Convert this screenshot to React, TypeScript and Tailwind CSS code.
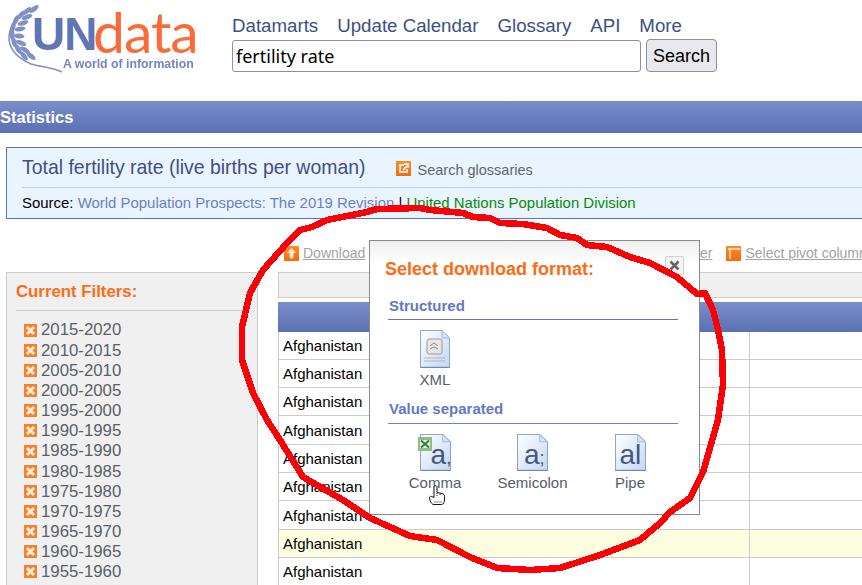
const navItems = ['Datamarts', 'Update Calendar', 'Glossary', 'API', 'More'];
const periods = ['2015-2020', '2010-2015', '2005-2010', '2000-2005', '1995-2000', '1990-1995', '1985-1990', '1980-1985', '1975-1980', '1970-1975', '1965-1970', '1960-1965', '1955-1960'];
const rowHeights = ['h-[28px]', 'h-[28px]', 'h-[28px]', 'h-[29px]', 'h-[28px]', 'h-[28px]', 'h-[29px]', 'h-[28px]', 'h-[28px]'];

const leaves = [
	[34, 9, -38], [27, 11, -40], [21, 15, -48], [27, 17, -20], [16, 20, -62], [23, 23, -18], [13, 27, -75], [20, 29, -10],
	[12, 34, -88], [19, 36, 5], [14, 42, 75], [21, 43, 20], [18, 49, 60], [25, 50, 30], [24, 56, 50], [31, 56, 38],
];

const Logo = () => (
	<div className="relative w-[232px] h-[76px] shrink-0 blur-[0.4px]">
		<svg width="70" height="76" viewBox="0 0 70 76" className="absolute left-0 top-0">
			<path d="M36 8C20 14 10 24 9 36c-1 12 8 22 22 28 10 3 20 3 31 8" fill="none" stroke="#7f90c6" strokeWidth="1.5" />
			{leaves.map(([x, y, r]) => (
				<ellipse key={`${x}-${y}`} cx={x} cy={y} rx="5.5" ry="2.4" fill="#8191c6" transform={`rotate(${r} ${x} ${y})`} />
			))}
		</svg>
		<div className="absolute left-[32px] top-[10px] font-['Liberation_Sans',sans-serif] font-bold text-[46px] leading-[48px] tracking-[-1px] text-[#5f75b6]">UN</div>
		<div className="absolute left-[93px] top-[4px] font-['Lato',sans-serif] font-normal text-[57px] leading-[54px] tracking-[-1px] text-[#fb6b38]">data</div>
		<div className="absolute left-[63px] top-[58px] font-['Liberation_Sans',sans-serif] text-[12.300px] leading-[13px] font-bold text-[#7385bf] whitespace-nowrap">A world of information</div>
	</div>
);

const OrangeBox = ({ children, size = 15 }: { children: React.ReactNode; size?: number }) => (
	<svg width={size} height={size} viewBox="0 0 15 15" className="shrink-0 block">
		<defs>
			<linearGradient id="orangeFill" x1="0" y1="0" x2="0" y2="1">
				<stop offset="0" stopColor="#ff8a2a" />
				<stop offset="1" stopColor="#f76a0c" />
			</linearGradient>
		</defs>
		<rect width="15" height="15" fill="url(#orangeFill)" />
		{children}
	</svg>
);

const FilterX = () => (
	<svg width="13" height="13" viewBox="0 0 13 13" className="shrink-0">
		<rect width="13" height="13" fill="#fb7f26" />
		<path d="M3 3l7 7M10 3l-7 7" stroke="#ffeedd" strokeWidth="3" />
	</svg>
);

const DocIcon = ({ width, height, children }: { width: number; height: number; children?: React.ReactNode }) => (
	<svg width={width} height={height} viewBox="0 0 30 38" preserveAspectRatio="none" className="block">
		<defs>
			<linearGradient id="docFill" x1="0" y1="0" x2="1" y2="1">
				<stop offset="0" stopColor="#ffffff" />
				<stop offset="1" stopColor="#c4d7f2" />
			</linearGradient>
		</defs>
		<path d="M.5.5H22L29.5 8V37.5H.5Z" fill="url(#docFill)" stroke="#8ea6cf" />
		<path d="M22 .5V8h7.5Z" fill="#d6e3f5" stroke="#a9bcdc" />
		<path d="M.5 37.5H29.5" stroke="#6d88b8" strokeWidth="1.4" />
		{children}
	</svg>
);

const LetterDoc = ({ mark, offset, markClass }: { mark: string; offset: string; markClass: string }) => (
	<div className="relative w-[31px] h-[37px]">
		<DocIcon width={31} height={37} />
		<div className={`absolute top-[5px] font-['Liberation_Sans',sans-serif] text-[28px] leading-[32px] text-[#46587f] whitespace-nowrap ${offset}`}>
			a<span className={markClass}>{mark}</span>
		</div>
	</div>
);

const ExcelBadge = () => (
	<svg width="14" height="14" viewBox="0 0 14 14" className="absolute -left-[2px] top-[3px]">
		<rect width="14" height="14" fill="#8fbf84" />
		<rect x="2" y="3" width="10" height="8" fill="#e5f1e0" />
		<path d="M3 3.5l8 7M11 3.5l-8 7" stroke="#2f7d3a" strokeWidth="2" />
	</svg>
);

const FormatOption = ({ label, width, children }: { label: string; width: string; children: React.ReactNode }) => (
	<div className={`flex flex-col items-center shrink-0 ${width}`}>
		{children}
		<div className="mt-[3px] text-[15px] leading-[18px] text-[#555c6c] whitespace-nowrap">{label}</div>
	</div>
);

const DownloadModal = () => (
	<div className="absolute left-[369px] top-[240px] w-[331px] h-[275px] bg-white border border-[#8a8a8a] font-['Liberation_Sans',sans-serif] bg-gradient-to-b from-[#efefef] to-white to-[8%]">
		<div className="absolute left-[295px] top-[15px] w-[19px] h-[19px] rounded-[2px] border border-[#cfcfcf] bg-[#f4f4f4] flex items-center justify-center">
			<svg width="11" height="11" viewBox="0 0 11 11">
				<path d="M1.5 1.5l8 8M9.500 1.500l-8 8" stroke="#666" strokeWidth="2.600" />
			</svg>
		</div>
		<div className="pl-[15px] pt-[18px] text-[18px] leading-[21px] font-bold text-[#ff6a13]">Select download format:</div>
		<div className="ml-[18px] w-[290px] mt-[16px] pb-[3px] pl-px border-b border-[#6077b3] text-[15px] leading-[20px] font-bold text-[#6379c0]">Structured</div>
		<div className="ml-[50px] mt-[10px] w-[30px] flex flex-col items-center">
			<DocIcon width={30} height={38}>
				<rect x="7" y="9" width="15" height="15" rx="2" fill="#e7e7e7" stroke="#9a9a9a" />
				<path d="M10 16l4-3 4 3M10 19l4-2 4 2" fill="none" stroke="#888" />
				<path d="M4 28h21M4 31h21" stroke="#a9b3c4" />
			</DocIcon>
			<div className="mt-[3px] text-[15px] leading-[18px] text-[#555c6c]">XML</div>
		</div>
		<div className="ml-[18px] w-[290px] mt-[10px] pb-[4px] pl-px border-b border-[#6a86c0] text-[15px] leading-[20px] font-bold text-[#6379c0]">Value separated</div>
		<div className="flex ml-[20px] mt-[10px]">
			<FormatOption label="Comma" width="w-[90px]">
				<div className="relative">
					<LetterDoc mark="," offset="left-[11px]" markClass="text-[20px]" />
					<ExcelBadge />
				</div>
			</FormatOption>
			<FormatOption label="Semicolon" width="w-[105px]">
				<LetterDoc mark=";" offset="left-[7px]" markClass="text-[18px]" />
			</FormatOption>
			<FormatOption label="Pipe" width="w-[90px]">
				<LetterDoc mark="l" offset="left-[5px]" markClass="text-[28px]" />
			</FormatOption>
		</div>
		<svg width="17" height="21" viewBox="0 0 17 21" className="absolute left-[59px] top-[244px]">
			<path d="M5 1.500c1-1 2.500-1 3 0v6l5 1c2 .5 2.500 1.500 2.500 3v3.500c0 2-1 4.500-3 4.500H5c-2 0-3-2-4-4l-.5-3c0-1 1-1.500 2-1l2.500 1Z" fill="#fff" stroke="#111" />
			<path d="M8 8v3M11 9v2M5.500 17h7" stroke="#111" strokeDasharray="1 1" fill="none" />
		</svg>
	</div>
);

const RedScribble = () => (
	<svg width="862" height="585" viewBox="0 0 862 585" className="absolute left-0 top-0 pointer-events-none" shapeRendering="crispEdges">
		<path
			d="M300 230L287 243L263 270L250 293L242 327L242 360L253 393L267 420L280 440L303 477L343 500L370 518L410 536L437 540L470 557L497 568L530 570L560 568L600 555L640 540L660 523L670 512L690 498L703 472L710 448L718 420L723 385L722 350L718 330L713 310L705 293L697 294L677 277L650 263L630 257L607 247L587 245L577 238L560 235L547 228L523 224L500 223L490 218L473 217L463 213L430 210L420 208L377 209L367 212L327 220L312 227L300 230Z"
			fill="none"
			stroke="#fb0007"
			strokeWidth="6.5"
			strokeLinejoin="round"
		/>
	</svg>
);

export default function App() {
	return (
		<div className="relative w-[862px] h-[585px] overflow-hidden bg-white font-['Liberation_Sans',sans-serif]">
			<header className="flex h-[101px]">
				<Logo />
				<div className="pt-[15px]">
					<nav className="flex gap-[19px] text-[18.700px] leading-[22px] text-[#3d4f85] whitespace-nowrap">
						{navItems.map((item) => (
							<span key={item}>{item}</span>
						))}
					</nav>
					<div className="flex items-start gap-[5px] mt-[2px]">
						<div className="w-[409px] h-[32px] mt-px border border-[#8f8f9d] rounded-[3px] pl-[3px] font-['Noto_Sans',sans-serif] text-[18px] leading-[30px] text-black">fertility rate</div>
						<button className="w-[71px] h-[33px] pt-px rounded-[4px] border border-[#8f8f9d] bg-[#e9e9ed] text-[18px] text-black">Search</button>
					</div>
				</div>
			</header>

			<div className="h-[32px] bg-gradient-to-b from-[#7b8dcb] to-[#5a70b2] text-white font-bold text-[16.500px] leading-[32px]">Statistics</div>

			<section className="ml-[6px] mt-[14px] w-[900px] h-[72px] border border-[#5b74b5] bg-[#eaf4fe] px-[15px]">
				<div className="flex items-center h-[40px] border-b border-[#b5cdf0]">
					<span className="pt-px text-[19.450px] text-[#3f4f85]">Total fertility rate (live births per woman)</span>
					<span className="ml-[30px] pt-px">
						<OrangeBox>
							<path d="M3 3h5v2H5v5h5V8h2v4H3Z" fill="#ffe9d6" />
							<path d="M7 9l4-4M8 3h4v4" stroke="#ffe9d6" strokeWidth="1.800" fill="none" />
						</OrangeBox>
					</span>
					<span className="ml-[7px] pt-[6px] text-[14.500px] text-[#5f6670]">Search glossaries</span>
				</div>
				<div className="text-[14.950px] leading-[29px] whitespace-nowrap">
					<span className="text-black">Source: </span>
					<span className="text-[#6a80c4]">World Population Prospects: The 2019 Revision</span>
					<span className="text-black"> | </span>
					<span className="text-[#0a8a0a]">United Nations Population Division</span>
				</div>
			</section>

			<div className="flex items-center h-[16px] mt-[26px] text-[14px] leading-[16px] text-[#a3a3a3] whitespace-nowrap">
				<span className="ml-[284px]">
					<OrangeBox>
						<path d="M7.500 2L12 7H9.500v4.500L7.500 13l-2-1.500V7H3Z" fill="#ffe9d6" />
					</OrangeBox>
				</span>
				<span className="ml-[4px] underline">Download</span>
				<span className="ml-[316px] w-[36px] text-right underline">Filter</span>
				<span className="ml-[14px]">
					<OrangeBox>
						<path d="M2 3h12M4 3v10" stroke="#ffe9d6" strokeWidth="1.500" fill="none" />
					</OrangeBox>
				</span>
				<span className="ml-[4px] underline">Select pivot columns</span>
			</div>

			<div className="flex items-start mt-[11px] ml-[6px]">
				<aside className="w-[252px] h-[400px] shrink-0 border border-[#cccccc] bg-[#f0f0f0] px-[9px]">
					<div className="h-[38px] pt-[9px] border-b border-[#cccccc] text-[16.800px] leading-[20px] font-bold text-[#fb6d16]">Current Filters:</div>
					<ul className="mt-[9px] ml-[8px]">
						{periods.map((period) => (
							<li key={period} className="flex items-center gap-[4px] h-[20.170px] text-[16.800px] text-[#5a5f66]">
								<FilterX />
								{period}
							</li>
						))}
					</ul>
				</aside>
				<div className="ml-[20px] w-[600px] shrink-0">
					<div className="h-[26px] border border-[#cccccc] bg-[#f0f0f0]" />
					<div className="h-[30px] mt-[4px] bg-gradient-to-b from-[#7b8dcb] to-[#5a70b2]" />
					<div className="border-l border-[#cccccc]">
						{rowHeights.map((height, i) => (
							<div key={i} className={`flex items-center border-b border-[#cccccc] text-[15px] text-black ${height} ${i === 7 ? 'bg-[#fdfde0]' : ''}`}>
								<div className="w-[471px] h-full pl-[4px] pt-[2px] flex items-center border-r border-[#cccccc]">Afghanistan</div>
							</div>
						))}
					</div>
				</div>
			</div>

			<DownloadModal />
			<RedScribble />
		</div>
	);
}
